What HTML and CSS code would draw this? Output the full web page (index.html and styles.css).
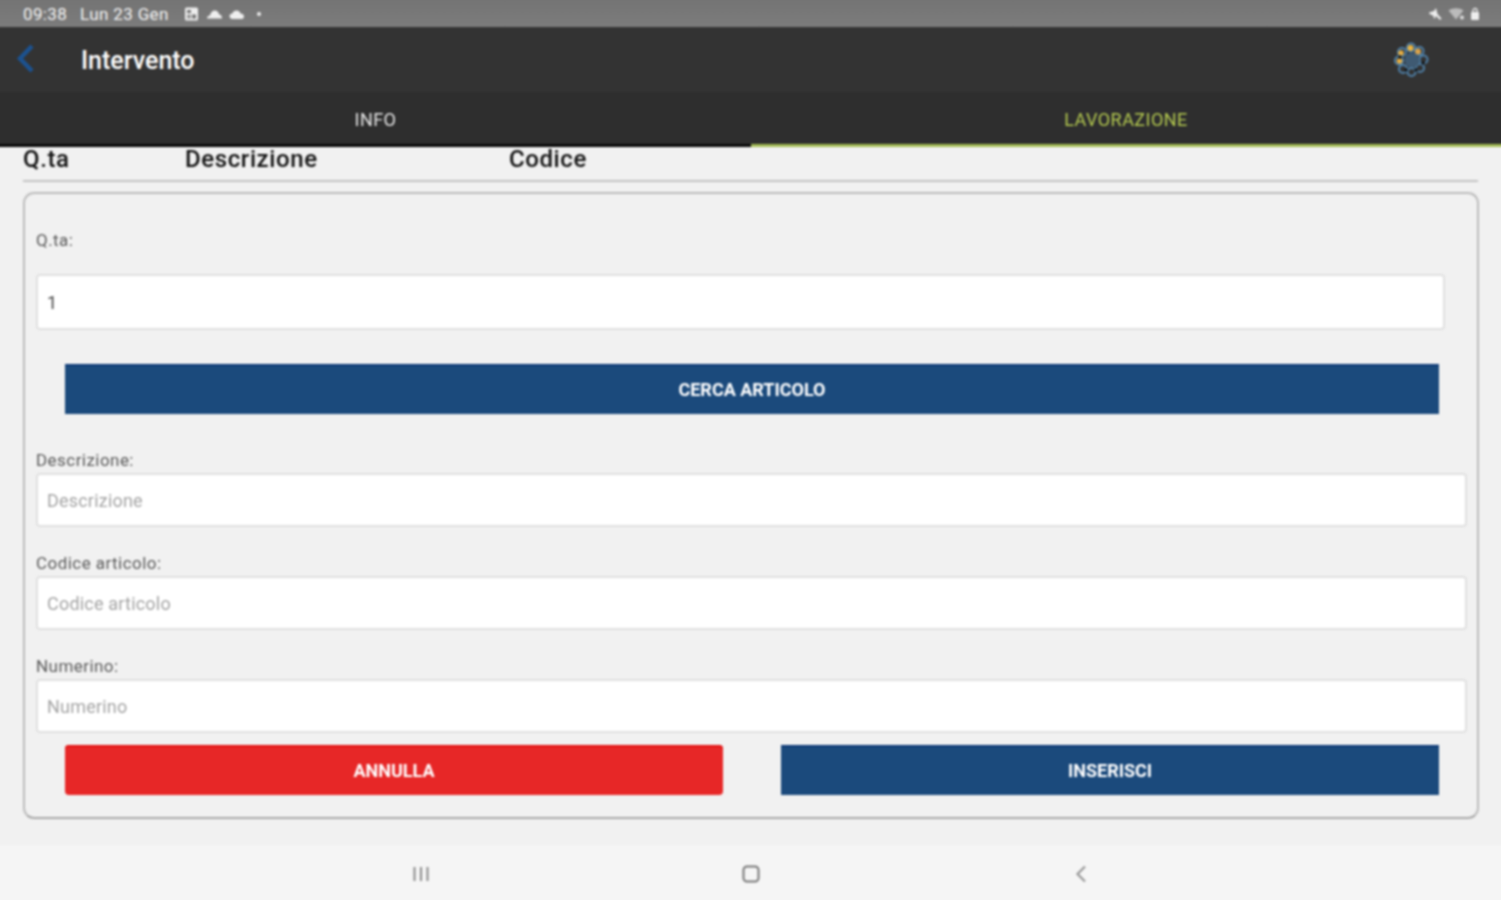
FILE: index.html
```html
<!DOCTYPE html>
<html lang="it">
<head>
<meta charset="utf-8">
<title>Intervento</title>
<link rel="stylesheet" href="styles.css">
</head>
<body>
<div class="screen">
  <div class="status">
    <div class="status-left">
      <span class="time">09:38</span>
      <span class="date">Lun 23 Gen</span>
      <svg class="st-ic" width="16" height="14" viewBox="0 0 16 14"><rect x="1" y="0.5" width="13" height="13" rx="1.5" fill="#eee"/><rect x="3" y="3" width="4" height="3" fill="#777"/><rect x="8" y="7.5" width="4" height="4" fill="#777"/><rect x="3" y="7.5" width="4" height="4" fill="#999"/></svg>
      <svg class="st-ic" width="17" height="12" viewBox="0 0 17 12"><path d="M1 10.500c0-2 1.400-3 3-3 .4-3 2.500-5 4.800-5 2.400 0 4 1.800 4.400 4 1.700 0 2.800 1.600 2.800 4z" fill="#eee"/></svg>
      <svg class="st-ic" width="16" height="12" viewBox="0 0 16 12"><path d="M3.500 11C1.800 11 .5 9.800.5 8.200S1.800 5.500 3.300 5.500C4 3.500 5.500 2.500 7.500 2.500c2 0 3.500 1.300 4 3 1.900 0 3.500 1.200 3.500 2.900S13.700 11 12 11z" fill="#eee"/></svg>
      <span class="st-dot"></span>
    </div>
    <div class="status-right">
      <svg width="15" height="14" viewBox="0 0 15 14"><path d="M1 5.500 6 4l2-3 1.500 6 4 4.500-1.500 1.500-4-4-1.500 3L5 8.500 1.500 7z" fill="#eee"/></svg>
      <svg width="17" height="13" viewBox="0 0 17 13"><path d="M.5 3.500C4.500.5 11.500.5 15.500 3.500L8 12.500z" fill="#bbb"/><circle cx="14" cy="10.500" r="2" fill="#ddd"/></svg>
      <svg width="10" height="14" viewBox="0 0 10 14"><rect x="1" y="5" width="8" height="8" rx="1" fill="#eee"/><path d="M3 5.500V3.500a2 2 0 0 1 4 0v2" fill="none" stroke="#eee" stroke-width="1.300"/></svg>
    </div>
  </div>

  <header class="toolbar">
    <svg class="back" width="22" height="32" viewBox="0 0 22 32"><path d="M17 3 5 15.500 17 28" fill="none" stroke="#1c5290" stroke-width="4.500"/></svg>
    <h1 class="title">Intervento</h1>
    <svg class="logo" width="38" height="38" viewBox="0 0 38 38">
      <g fill="none" stroke="#4f80a8" stroke-width="2">
        <circle cx="19" cy="6.500" r="4"/><circle cx="27.500" cy="10" r="4"/><circle cx="31.500" cy="18.500" r="4"/><circle cx="28" cy="27" r="4"/><circle cx="19.500" cy="31" r="4"/><circle cx="11" cy="28" r="4"/><circle cx="7" cy="19.500" r="4"/><circle cx="10" cy="11" r="4"/>
      </g>
      <circle cx="20" cy="19" r="7.500" fill="#3f5a72"/>
      <circle cx="26" cy="10.500" r="3" fill="#d9a24a"/><circle cx="18.500" cy="7" r="3" fill="#edb53f"/><circle cx="9" cy="12" r="2.800" fill="#e5ad42"/><circle cx="7.500" cy="20" r="2.800" fill="#e5ad42"/>
      <circle cx="8" cy="16" r="1.800" fill="#111"/><circle cx="31" cy="22" r="1.800" fill="#111"/><circle cx="14" cy="29" r="1.800" fill="#111"/><circle cx="24" cy="29" r="1.800" fill="#111"/>
    </svg>
  </header>

  <nav class="tabs">
    <div class="tab tab-info">INFO</div>
    <div class="tab tab-active">LAVORAZIONE</div>
  </nav>

  <main class="content">
    <div class="cols">
      <span class="col col-qta">Q.ta</span>
      <span class="col col-desc">Descrizione</span>
      <span class="col">Codice</span>
    </div>
    <section class="card">
      <label class="label label-qta">Q.ta:</label>
      <div class="input input-qta">1</div>
      <button class="btn btn-blue btn-search">CERCA ARTICOLO</button>
      <label class="label label-first">Descrizione:</label>
      <div class="input ph">Descrizione</div>
      <label class="label">Codice articolo:</label>
      <div class="input ph">Codice articolo</div>
      <label class="label">Numerino:</label>
      <div class="input ph">Numerino</div>
      <div class="actions">
        <button class="btn btn-red">ANNULLA</button>
        <button class="btn btn-blue">INSERISCI</button>
      </div>
    </section>
  </main>

  <footer class="navbar">
    <svg width="18" height="16" viewBox="0 0 18 16"><path d="M2.500 1v14M9 1v14M15.500 1v14" stroke="#8a8a8a" stroke-width="2" fill="none"/></svg>
    <svg width="18" height="18" viewBox="0 0 18 18"><rect x="1.500" y="1.500" width="15" height="15" rx="3.500" fill="none" stroke="#777" stroke-width="2"/></svg>
    <svg width="18" height="18" viewBox="0 0 18 18"><path d="M13 1.500 5.500 9l7.500 7.500" fill="none" stroke="#999" stroke-width="2.200"/></svg>
  </footer>
</div>
</body>
</html>
```
FILE: styles.css
```css
* { box-sizing: border-box; }
html, body { margin: 0; padding: 0; }
body { width: 1501px; height: 900px; overflow: hidden; font-family: Roboto, "Liberation Sans", sans-serif; background: #f1f1f1; }
/* The screen bleeds 4px past the viewport so the soft focus does not fade at the window edges. */
.screen { display: flex; flex-direction: column; width: 1509px; height: 908px; margin: -4px; filter: blur(0.8px); }

.status { height: 31px; display: flex; justify-content: space-between; align-items: center; padding: 4px 25px 0 27px; background: linear-gradient(#737373, #7c7c7c); color: #f4f4f4; font-size: 17px; letter-spacing: 0.35px; }
.status-left { display: flex; align-items: center; }
.time { margin-right: 13px; }
.date { margin-right: 15px; }
.st-ic { margin-right: 6px; }
.st-dot { width: 4px; height: 4px; border-radius: 50%; background: #eee; margin-left: 6px; }
.status-right { display: flex; align-items: center; gap: 5px; }

.toolbar { height: 65px; background: #333; display: flex; align-items: center; padding: 0 75px 0 19px; }
.back { flex: none; margin-bottom: 2px; }
.title { margin: 2px 0 0 44px; flex: 1; font-size: 25px; font-weight: 500; color: #fff; }
.logo { flex: none; }

.tabs { height: 55px; display: flex; background: #2e2e2e; }
.tab { padding-top: 17px; text-align: center; font-size: 18px; letter-spacing: 0.45px; color: #e8e8e8; border-bottom: 3px solid #0a0a0a; }
.tab-info { width: 755px; padding-left: 4px; }
.tab-active { width: 754px; padding-right: 4px; color: #b4c950; border-bottom-color: #a5bd55; }

.content { flex: 1; padding: 0 26px 0 27px; display: flex; flex-direction: column; }
.cols { height: 35px; margin-right: 1px; border-bottom: 2px solid #c4c4c4; display: flex; align-items: flex-start; font-size: 24px; font-weight: 500; letter-spacing: 0.6px; color: #111; line-height: 25px; }
.col-qta { width: 162px; }
.col-desc { width: 324px; }

.card { margin-top: 10px; height: 627px; border: 2px solid #bdbdbd; border-bottom-color: #a9a9a9; border-radius: 11px; padding: 0 10px 0 11px; }
.label { display: block; font-size: 17px; letter-spacing: 0.45px; line-height: 20px; color: #5a5a5a; }
.label-qta { margin-top: 36px; margin-bottom: 24px; }
.label-first { margin-top: 36px; }
.label:not(.label-qta) { height: 23px; }
.input { height: 54px; margin-bottom: 26px; padding-left: 9px; background: #fff; border: 2px solid #e0e0e0; border-radius: 4px; font-size: 18px; letter-spacing: 0.2px; line-height: 52px; color: #444; }
.input-qta { width: 1409px; height: 56px; line-height: 54px; margin-bottom: 34px; }
.ph { color: #a4a4a4; }

.btn { display: block; height: 50px; border: 0; box-shadow: inset 0 2px 0 #0d3a78; color: #fff; font: 700 18px Roboto, "Liberation Sans", sans-serif; padding: 0; }
.btn-blue { background: #1b4a7c; }
.btn-search { width: 1374px; margin-left: 29px; }
.actions { display: flex; justify-content: space-between; margin: -14px 28px 0 29px; }
.actions .btn { width: 658px; }
.btn-red { background: #e72727; box-shadow: inset 0 2px 0 #e31212; border-radius: 4px; }

.navbar { height: 59px; background: #f5f5f5; display: flex; align-items: center; justify-content: center; gap: 312px; padding: 2px 0 4px; }
```
